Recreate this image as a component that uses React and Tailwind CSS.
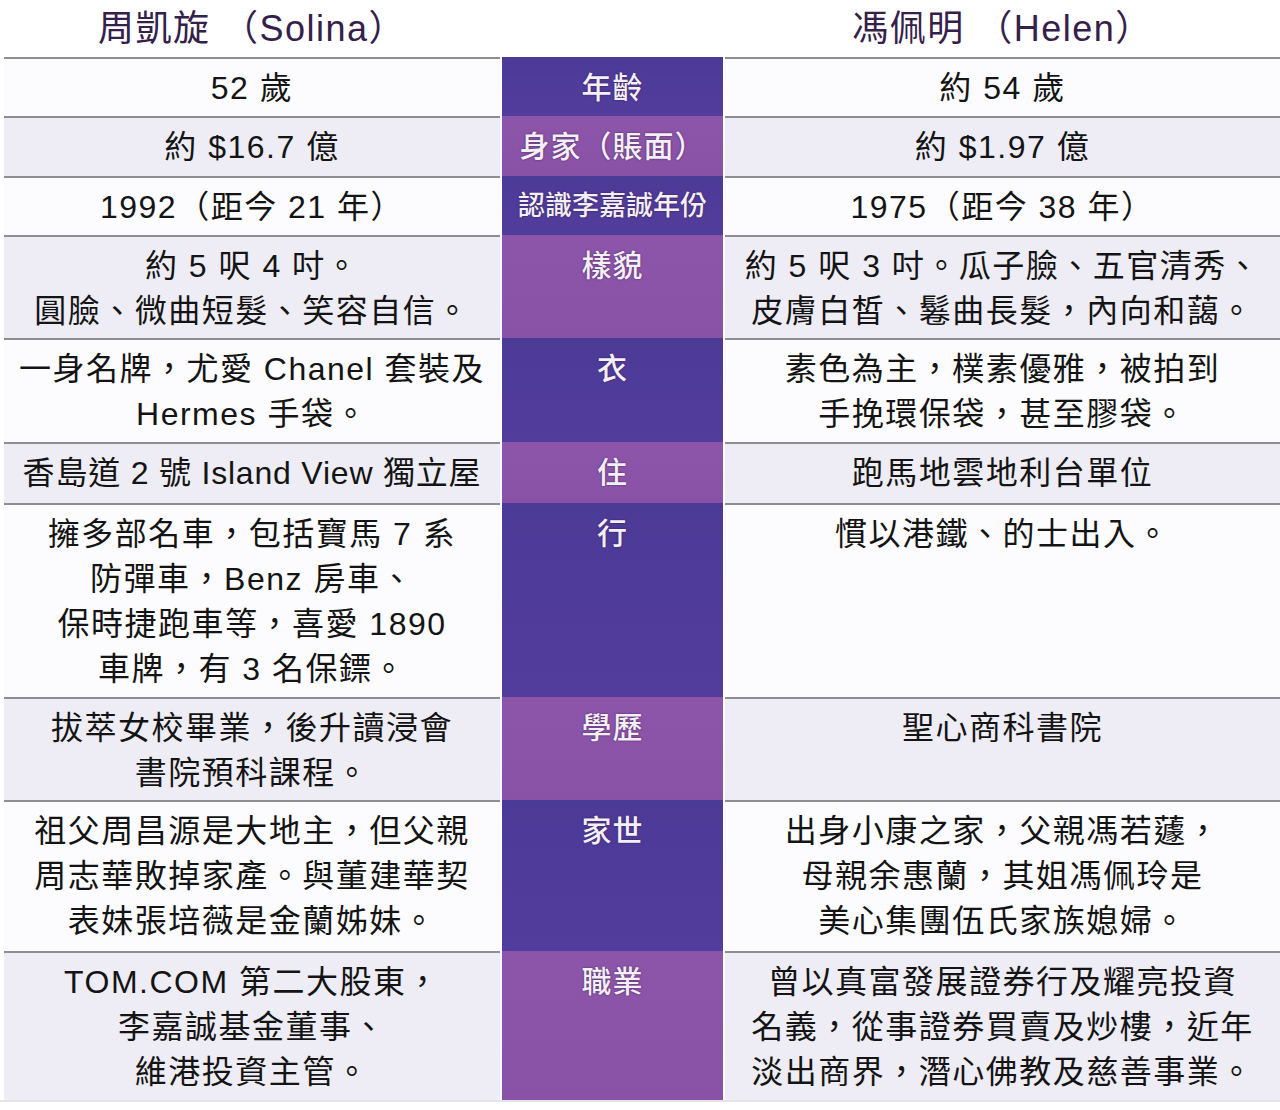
const FONT = '"Liberation Sans", "Noto Sans CJK TC", sans-serif'

const ROWS = [
  { h: 'h-[59px]', label: '年齡', left: ['52 歲'], right: ['約 54 歲'] },
  { h: 'h-[60px]', label: '身家（賬面）', left: ['約 $16.7 億'], right: ['約 $1.97 億'] },
  { h: 'h-[59px]', label: '認識李嘉誠年份', small: true, left: ['1992（距今 21 年）'], right: ['1975（距今 38 年）'] },
  {
    h: 'h-[103px]',
    label: '樣貌',
    left: ['約 5 呎 4 吋。', '圓臉、微曲短髮、笑容自信。'],
    right: ['約 5 呎 3 吋。瓜子臉、五官清秀、', '皮膚白皙、鬈曲長髮，內向和藹。'],
  },
  {
    h: 'h-[104px]',
    label: '衣',
    left: ['一身名牌，尤愛 Chanel 套裝及', 'Hermes 手袋。'],
    right: ['素色為主，樸素優雅，被拍到', '手挽環保袋，甚至膠袋。'],
  },
  { h: 'h-[61px]', label: '住', left: ['香島道 2 號 Island View 獨立屋'], right: ['跑馬地雲地利台單位'], tight: true },
  {
    h: 'h-[194px]',
    label: '行',
    left: ['擁多部名車，包括寶馬 7 系', '防彈車，Benz 房車、', '保時捷跑車等，喜愛 1890', '車牌，有 3 名保鏢。'],
    right: ['慣以港鐵、的士出入。'],
  },
  {
    h: 'h-[103px]',
    label: '學歷',
    left: ['拔萃女校畢業，後升讀浸會', '書院預科課程。'],
    right: ['聖心商科書院'],
  },
  {
    h: 'h-[151px]',
    label: '家世',
    left: ['祖父周昌源是大地主，但父親', '周志華敗掉家產。與董建華契', '表妹張培薇是金蘭姊妹。'],
    right: ['出身小康之家，父親馮若蘧，', '母親余惠蘭，其姐馮佩玲是', '美心集團伍氏家族媳婦。'],
  },
  {
    h: 'h-[149px]',
    label: '職業',
    left: ['TOM.COM 第二大股東，', '李嘉誠基金董事、', '維港投資主管。'],
    right: ['曾以真富發展證券行及耀亮投資', '名義，從事證券買賣及炒樓，近年', '淡出商界，潛心佛教及慈善事業。'],
  },
]

function Lines({ lines, tight }) {
  return lines.map((line, i) => (
    <div key={i} className={tight ? 'whitespace-nowrap tracking-[0.8px]' : 'whitespace-nowrap'}>
      {line}
    </div>
  ))
}

export default function App() {
  return (
    <div className="h-[1110px] w-[1280px] bg-white pl-[4px]" style={{ fontFamily: FONT }}>
      <div className="grid h-[57px] grid-cols-[496px_221px_555px] gap-x-[2px] text-[36px] tracking-[1.5px] text-[#35204a]">
        <div className="flex items-center justify-center pt-[1px]">周凱旋 （Solina）</div>
        <div />
        <div className="flex items-center justify-center pt-[1px]">馮佩明 （Helen）</div>
      </div>

      {ROWS.map((row, i) => {
        const odd = i % 2 === 1
        const cellBg = odd ? 'bg-[#eeecf4]' : 'bg-[#fcfcfe]'
        const midBg = odd ? 'bg-gradient-to-b from-[#8d55aa] to-[#8a52a6]' : 'bg-gradient-to-b from-[#4c3a97] to-[#533d9c]'
        return (
          <div key={row.label} className={`grid grid-cols-[496px_221px_555px] gap-x-[2px] ${row.h}`}>
            <div className={`border-t-[2px] border-[#8e8e92] ${cellBg} pt-[7px] text-center text-[32px] leading-[45px] tracking-[1.5px] text-[#141414]`}>
              <Lines lines={row.left} tight={row.tight} />
            </div>
            <div
              className={`${midBg} pt-[8px] text-center font-medium leading-[45px] text-[#f4eef7] [text-shadow:0_0_2px_rgba(40,20,60,0.8)] ${
                row.small ? 'text-[27px]' : 'text-[30px] tracking-[1px]'
              }`}
            >
              {row.label}
            </div>
            <div className={`border-t-[2px] border-[#8e8e92] ${cellBg} pt-[7px] text-center text-[32px] leading-[45px] tracking-[1.5px] text-[#141414]`}>
              <Lines lines={row.right} />
            </div>
          </div>
        )
      })}
      <div className="ml-[-4px] h-[2px] bg-[#e4e2ea]" />
    </div>
  )
}
